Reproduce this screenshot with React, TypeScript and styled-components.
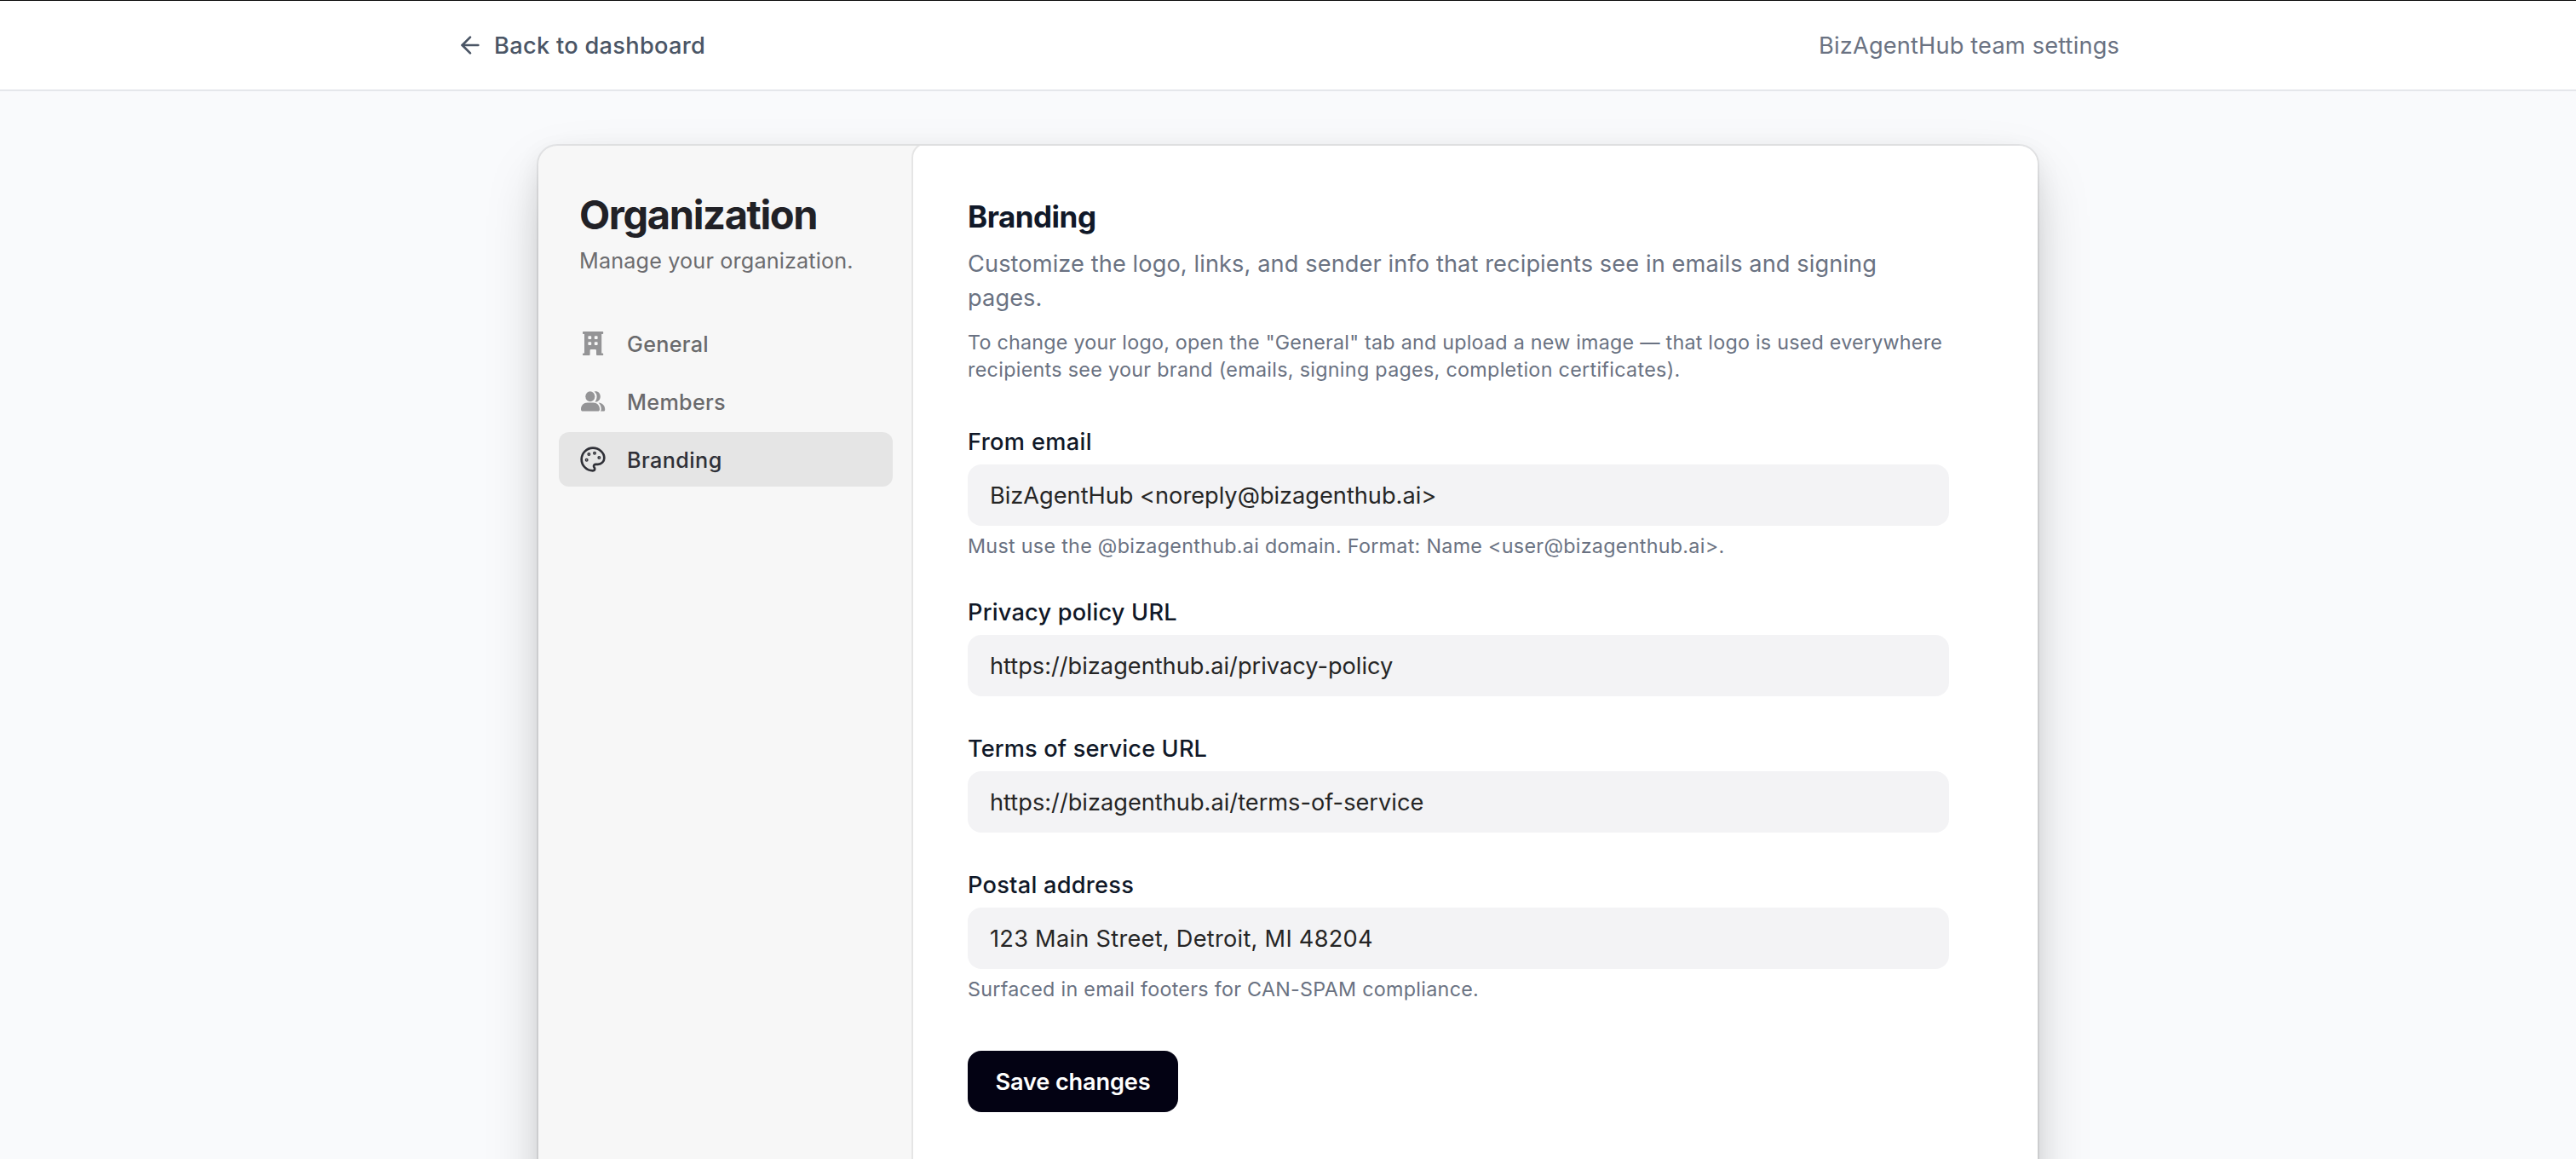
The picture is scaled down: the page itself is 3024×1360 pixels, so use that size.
import React from "react";
import styled, { createGlobalStyle } from "styled-components";
import { ArrowLeft } from "lucide-react";

const GlobalStyle = createGlobalStyle`
  *, *::before, *::after { box-sizing: border-box; }
  html, body { margin: 0; padding: 0; height: 100%; overflow: hidden; }
  body {
    background: #f9fafc;
    font-family: Inter, "Liberation Sans", sans-serif;
    -webkit-font-smoothing: antialiased;
  }
  h1, h2, p { margin: 0; }
`;

type Track = { $track?: number };
const track = (p: Track) => `${p.$track ?? 0}px`;

const Page = styled.div`
  height: 1360px;
  overflow: hidden;
  border-top: 1px solid #0a0a0a;
  display: flex;
  flex-direction: column;
`;

const Header = styled.header`
  flex: none;
  height: 106px;
  background: #ffffff;
  border-bottom: 2px solid #e5e7eb;
`;

const HeaderInner = styled.div`
  width: 2048px;
  height: 100%;
  margin: 0 auto;
  padding: 0 48px;
  display: flex;
  align-items: center;
  justify-content: space-between;
`;

const BackLink = styled.a`
  display: flex;
  align-items: center;
  gap: 12px;
  color: #4a5565;
  text-decoration: none;
`;

const BackText = styled.span<Track>`
  padding-top: 2px;
  font-size: 27.2px;
  line-height: 40px;
  font-weight: 500;
  letter-spacing: ${track};
`;

const HeaderNote = styled.span<Track>`
  padding-top: 2px;
  font-size: 27.2px;
  line-height: 40px;
  color: #6a7282;
  letter-spacing: ${track};
`;

const Main = styled.main`
  flex: none;
  display: flex;
  justify-content: center;
  padding-top: 64px;
`;

const Card = styled.div`
  width: 1760px;
  height: 1408px;
  display: grid;
  grid-template-columns: 440px 1fr;
  overflow: hidden;
  border-radius: 22px;
  background: #f7f7f7;
  box-shadow:
    0 0 0 2px rgba(0, 0, 0, 0.07),
    0 10px 30px rgba(0, 0, 0, 0.08),
    0 30px 70px -10px rgba(20, 20, 20, 0.22);
`;

const Sidebar = styled.aside`
  padding: 53px 24px 0;
`;

const SidebarHead = styled.div`
  display: flex;
  flex-direction: column;
  gap: 8px;
  padding-left: 24px;
`;

const SidebarTitle = styled.h1<Track>`
  margin-top: -1px;
  font-size: 47px;
  line-height: 57px;
  font-weight: 700;
  color: #212126;
  letter-spacing: ${track};
`;

const SidebarSubtitle = styled.p<Track>`
  font-size: 25.2px;
  line-height: 36px;
  color: #6c6c6f;
  letter-spacing: ${track};
`;

const Nav = styled.nav`
  display: flex;
  flex-direction: column;
  gap: 4px;
  margin-top: 47px;
`;

const NavItem = styled.a<{ $active?: boolean }>`
  height: 64px;
  padding-left: 24px;
  display: flex;
  align-items: center;
  gap: 24px;
  border-radius: 12px;
  background: ${(p) => (p.$active ? "#e5e5e5" : "transparent")};
  color: ${(p) => (p.$active ? "#2f3037" : "#6a6a6c")};
  text-decoration: none;

  svg {
    flex: none;
    color: ${(p) => (p.$active ? "#2f3037" : "#949496")};
  }
`;

const NavLabel = styled.span<Track>`
  padding-top: 2px;
  font-size: 25.2px;
  line-height: 36px;
  font-weight: 500;
  letter-spacing: ${track};
`;

const Content = styled.section`
  margin-top: -2px;
  padding: 57px 104px 0 64px;
  border-radius: 16px 0 0 16px;
  background: #ffffff;
  box-shadow: 0 0 0 2px rgba(0, 0, 0, 0.07);
`;

const SectionTitle = styled.h2<Track>`
  font-size: 35px;
  line-height: 56px;
  font-weight: 700;
  color: #101828;
  letter-spacing: ${track};
`;

const Lead = styled.p<Track>`
  margin-top: 8px;
  font-size: 27.2px;
  line-height: 40px;
  color: #6a7282;
  letter-spacing: ${track};
`;

const Note = styled.p`
  margin-top: 16px;
  font-size: 23.3px;
  line-height: 32px;
  color: #6a7282;
`;

const Line = styled.span<Track>`
  display: block;
  white-space: nowrap;
  letter-spacing: ${track};
`;

const Form = styled.form`
  display: flex;
  flex-direction: column;
  align-items: stretch;
  gap: 48px;
  margin-top: 55px;
`;

const Field = styled.div`
  display: flex;
  flex-direction: column;
`;

const Label = styled.label<Track>`
  font-size: 27.2px;
  line-height: 28px;
  font-weight: 500;
  color: #101828;
  letter-spacing: ${track};
`;

const Input = styled.input<Track>`
  height: 72px;
  margin: 12px 0 0;
  padding: 1px 26px 0;
  border: 0;
  border-radius: 16px;
  outline: none;
  background: #f3f3f5;
  color: #252525;
  font-family: inherit;
  font-size: 27.2px;
  letter-spacing: ${track};
`;

const Help = styled.p<Track>`
  margin-top: 8px;
  font-size: 23.3px;
  line-height: 32px;
  color: #6a7282;
  letter-spacing: ${track};
`;

const SaveButton = styled.button<Track>`
  align-self: flex-start;
  width: 247px;
  height: 72px;
  margin: 8px 0 0;
  padding: 1px 0 0;
  border: 0;
  border-radius: 16px;
  background: #030213;
  color: #ffffff;
  font-family: inherit;
  font-size: 27.2px;
  font-weight: 600;
  letter-spacing: ${track};
`;

const BuildingIcon = () => (
  <svg width="32" height="32" viewBox="0 0 16 16" fill="currentColor">
    <path
      fillRule="evenodd"
      d="M2.4 1h11.3a.4.4 0 0 1 .4.4v.7a.4.4 0 0 1-.4.4h-.6v11.2h.6a.4.4 0 0 1 .4.4v.5a.4.4 0 0 1-.4.4h-3.2a.5.5 0 0 1-.5-.5v-2.4a.6.6 0 0 0-.6-.6H6.9a.6.6 0 0 0-.6.6v2.4a.5.5 0 0 1-.5.5H2.4a.4.4 0 0 1-.4-.4v-.5a.4.4 0 0 1 .4-.4H3V2.5h-.6a.4.4 0 0 1-.4-.4v-.7a.4.4 0 0 1 .4-.4Zm3.2 2.6a.4.4 0 0 0-.4.4v1.1c0 .2.2.4.4.4h1.1c.2 0 .4-.2.4-.4V4a.4.4 0 0 0-.4-.4H5.6Zm3.7 0a.4.4 0 0 0-.4.4v1.1c0 .2.2.4.4.4h1.1c.2 0 .4-.2.4-.4V4a.4.4 0 0 0-.4-.4H9.3ZM5.6 7.1a.4.4 0 0 0-.4.4v1.1c0 .2.2.4.4.4h1.1c.2 0 .4-.2.4-.4V7.5a.4.4 0 0 0-.4-.4H5.6Zm3.7 0a.4.4 0 0 0-.4.4v1.1c0 .2.2.4.4.4h1.1c.2 0 .4-.2.4-.4V7.5a.4.4 0 0 0-.4-.4H9.3Z"
    />
  </svg>
);

const MembersIcon = () => (
  <svg width="32" height="32" viewBox="0 0 16 16" fill="currentColor">
    <ellipse cx="6.4" cy="5.1" rx="2.75" ry="3" />
    <path d="M1 12.6c0-2.4 1.7-3.9 3.7-3.9h3.6c2 0 3.7 1.5 3.7 3.9 0 .8-.4 1.2-1.1 1.2H2.1c-.7 0-1.1-.4-1.1-1.2Z" />
    <path d="M8.8 2.2C11 1.7 12.4 3.2 12.4 5.1c0 1.900-1.3 3.3-3.2 3.2.7-.8 1.1-1.900 1.100-3.200 0-1.200-.5-2.200-1.500-2.900Z" />
    <path d="M11.3 8.7c2.3.2 3.8 1.7 3.8 4 0 .8-.3 1.1-1 1.1h-1.6c.3-.4.4-.8.4-1.3 0-1.6-.6-2.900-1.600-3.800Z" />
  </svg>
);

const PaletteIcon = () => (
  <svg
    width="32"
    height="32"
    viewBox="0 0 24 24"
    fill="none"
    stroke="currentColor"
    strokeWidth="2"
    strokeLinecap="round"
    strokeLinejoin="round"
  >
    <path d="M12 2C6.5 2 2 6.5 2 12s4.5 10 10 10c.926 0 1.648-.746 1.648-1.688 0-.437-.18-.835-.437-1.125-.29-.289-.438-.652-.438-1.125a1.64 1.64 0 0 1 1.668-1.668h1.996c3.051 0 5.555-2.503 5.555-5.554C21.965 6.012 17.461 2 12 2z" />
    <g strokeWidth="1.1">
      <circle cx="13.5" cy="6.5" r="0.95" />
      <circle cx="17.5" cy="10.5" r="0.95" />
      <circle cx="8.5" cy="7.5" r="0.95" />
      <circle cx="6.5" cy="12.5" r="0.95" />
    </g>
  </svg>
);

const navItems = [
  { label: "General", icon: <BuildingIcon />, track: 0.3 },
  { label: "Members", icon: <MembersIcon />, track: 0.3 },
  { label: "Branding", icon: <PaletteIcon />, track: 0.42, active: true },
];

const fields = [
  {
    id: "from-email",
    label: "From email",
    labelTrack: 0.35,
    value: "BizAgentHub <noreply@bizagenthub.ai>",
    valueTrack: -0.01,
    help: "Must use the @bizagenthub.ai domain. Format: Name <user@bizagenthub.ai>.",
    helpTrack: 0.295,
  },
  {
    id: "privacy-url",
    label: "Privacy policy URL",
    labelTrack: 0.2,
    value: "https://bizagenthub.ai/privacy-policy",
    valueTrack: 0,
  },
  {
    id: "terms-url",
    label: "Terms of service URL",
    labelTrack: 0.13,
    value: "https://bizagenthub.ai/terms-of-service",
    valueTrack: 0.01,
  },
  {
    id: "postal-address",
    label: "Postal address",
    labelTrack: 0.25,
    value: "123 Main Street, Detroit, MI 48204",
    valueTrack: 0.26,
    help: "Surfaced in email footers for CAN-SPAM compliance.",
    helpTrack: 0.285,
  },
];

export default function App() {
  return (
    <>
      <GlobalStyle />
      <Page>
        <Header>
          <HeaderInner>
            <BackLink>
              <ArrowLeft size={32} strokeWidth={2} />
              <BackText $track={0.3}>Back to dashboard</BackText>
            </BackLink>
            <HeaderNote $track={0.17}>BizAgentHub team settings</HeaderNote>
          </HeaderInner>
        </Header>
        <Main>
          <Card>
            <Sidebar>
              <SidebarHead>
                <SidebarTitle $track={-1.35}>Organization</SidebarTitle>
                <SidebarSubtitle $track={0.16}>Manage your organization.</SidebarSubtitle>
              </SidebarHead>
              <Nav>
                {navItems.map((item) => (
                  <NavItem key={item.label} $active={item.active}>
                    {item.icon}
                    <NavLabel $track={item.track}>{item.label}</NavLabel>
                  </NavItem>
                ))}
              </Nav>
            </Sidebar>
            <Content>
              <SectionTitle $track={-0.5}>Branding</SectionTitle>
              <Lead $track={0.1}>
                Customize the logo, links, and sender info that recipients see in emails and signing
                pages.
              </Lead>
              <Note>
                <Line $track={0.235}>
                  To change your logo, open the "General" tab and upload a new image — that logo is
                  used everywhere
                </Line>
                <Line $track={0.305}>
                  recipients see your brand (emails, signing pages, completion certificates).
                </Line>
              </Note>
              <Form>
                {fields.map((f) => (
                  <Field key={f.id}>
                    <Label htmlFor={f.id} $track={f.labelTrack}>
                      {f.label}
                    </Label>
                    <Input id={f.id} defaultValue={f.value} $track={f.valueTrack} />
                    {f.help && <Help $track={f.helpTrack}>{f.help}</Help>}
                  </Field>
                ))}
                <SaveButton type="button" $track={-0.15}>
                  Save changes
                </SaveButton>
              </Form>
            </Content>
          </Card>
        </Main>
      </Page>
    </>
  );
}
